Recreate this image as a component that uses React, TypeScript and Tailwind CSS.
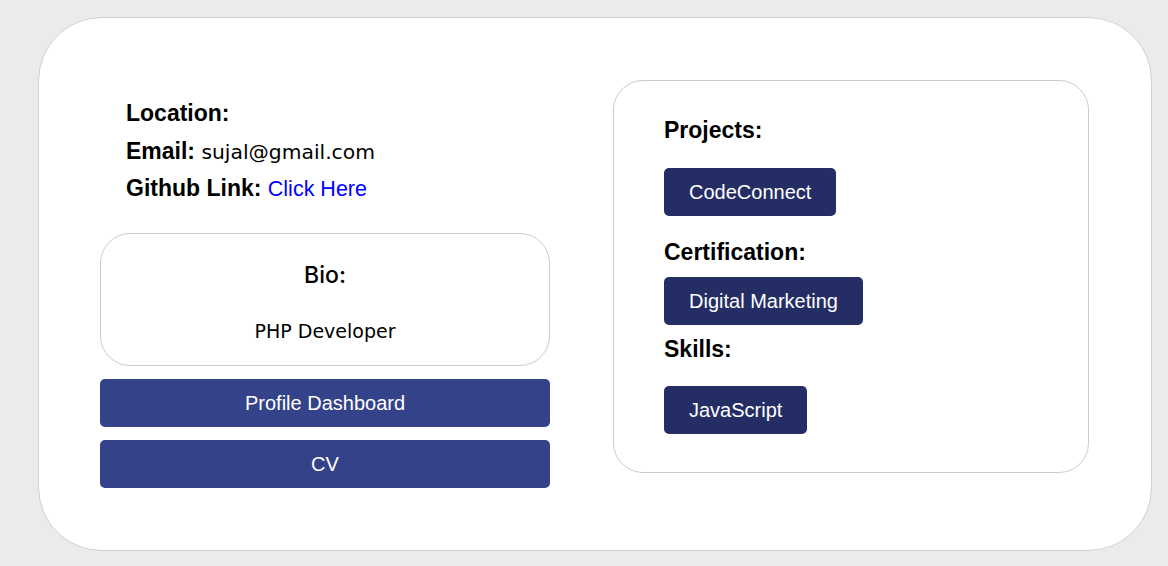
export default function App() {
  const arial = "font-['Liberation_Sans',Arial,sans-serif]";
  const pop = "font-['DejaVu_Sans',sans-serif]";

  return (
    <div className="min-h-screen bg-[#ebebeb] pt-[17px] pl-[38px]">
      <div className="w-[1114px] h-[534px] bg-white border border-[#d0d0d0] rounded-[64px] flex">
        {/* left column */}
        <div className="ml-[61px] pt-[77px] w-[450px] flex flex-col">
          <div className={`pl-[26px] text-[23px] text-black ${arial}`}>
            <div className="font-bold h-[37px] leading-[37px]">Location:</div>
            <div className="h-[38px] leading-[38px]">
              <span className="font-bold">Email:</span>{" "}
              <span className={`${pop} text-[20.3px]`}>sujal@gmail.com</span>
            </div>
            <div className="h-[37px] leading-[37px]">
              <span className="font-bold">Github Link:</span>{" "}
              <a href="#" className="text-[21.5px] text-[#0000ff]">
                Click Here
              </a>
            </div>
          </div>

          <div
            className={`mt-[26px] h-[133px] border border-[#cccccc] rounded-[30px] flex flex-col items-center pt-[27px] ${pop}`}
          >
            <div className="font-['Inter',sans-serif] text-[23px] leading-[28px] font-medium text-black">Bio:</div>
            <div className="mt-[30px] text-[19px] leading-[24px] text-black">PHP Developer</div>
          </div>

          <button
            className={`mt-[13px] h-[48px] rounded-[5px] bg-[#344289] text-white text-[20px] ${arial}`}
          >
            Profile Dashboard
          </button>
          <button
            className={`mt-[13px] h-[48px] rounded-[5px] bg-[#344289] text-white text-[20px] ${arial}`}
          >
            CV
          </button>
        </div>

        {/* right column */}
        <div
          className={`ml-[63px] mt-[62px] w-[476px] h-[393px] border border-[#cccccc] rounded-[30px] pl-[50px] pt-[36px] flex flex-col items-start ${arial}`}
        >
          <div className="text-[23px] leading-[26px] font-bold text-black">Projects:</div>
          <button className="mt-[25px] h-[48px] px-[25px] rounded-[5px] bg-[#252e64] text-white text-[20px]">
            CodeConnect
          </button>
          <div className="mt-[23px] text-[23px] leading-[26px] font-bold text-black">Certification:</div>
          <button className="mt-[12px] h-[48px] px-[25px] rounded-[5px] bg-[#252e64] text-white text-[20px]">
            Digital Marketing
          </button>
          <div className="mt-[11px] text-[23px] leading-[26px] font-bold text-black">Skills:</div>
          <button className="mt-[24px] h-[48px] px-[25px] rounded-[5px] bg-[#252e64] text-white text-[20px]">
            JavaScript
          </button>
        </div>
      </div>
    </div>
  );
}
